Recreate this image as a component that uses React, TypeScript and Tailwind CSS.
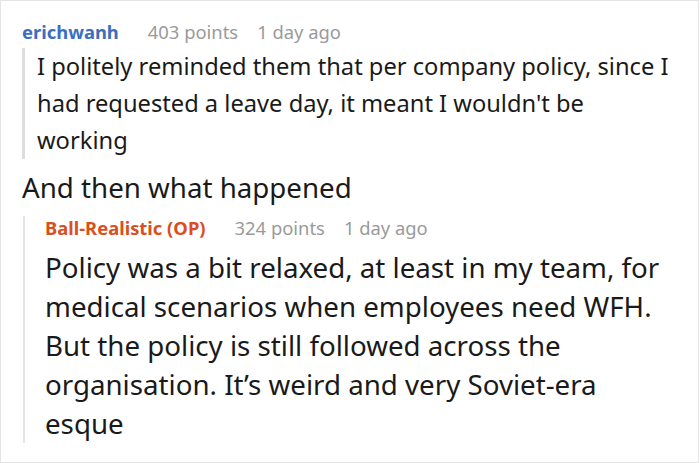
import React from 'react';

const font = { fontFamily: '"Noto Sans", "Open Sans", sans-serif' };

function Meta({ name, points, age, op = false }: { name: string; points: string; age: string; op?: boolean }) {
  return (
    <div className="flex items-baseline text-[18.4px] leading-[24px]">
      <span className={`font-bold ${op ? 'text-[#d94f1e]' : 'text-[#3a6fc0]'}`}>{name}</span>
      <span className="ml-[29px] text-[#9a9a9a]">{points}</span>
      <span className="ml-[19px] text-[#9a9a9a]">{age}</span>
    </div>
  );
}

export default function App() {
  return (
    <div className="h-[463px] w-[699px] overflow-hidden border border-[#e4e4e4] bg-white text-[#1a1a1a]" style={font}>
      <div className="pl-[21px] pr-[34px] pt-[19px]">
        <Meta name="erichwanh" points="403 points" age="1 day ago" />
        <div className="mr-[-14px] mt-[4px] border-l-[3px] border-[#dddddd] pl-[12px] text-[23.7px] leading-[37px]">
          I politely reminded them that per company policy, since I had requested a leave day, it meant I wouldn't be working
        </div>
        <div className="mt-[10px] text-[27.7px] leading-[36px]">And then what happened</div>
        <div className="ml-[1px] mt-[11px] border-l-[2px] border-[#e4e4e4] pl-[20px]">
          <Meta name="Ball-Realistic (OP)" points="324 points" age="1 day ago" op />
          <div className="mt-[8px] text-[27.7px] leading-[39px]">
            Policy was a bit relaxed, at least in my team, for medical scenarios when employees need WFH. But the policy is still followed across the organisation. It’s weird and very Soviet-era esque
          </div>
        </div>
      </div>
    </div>
  );
}
